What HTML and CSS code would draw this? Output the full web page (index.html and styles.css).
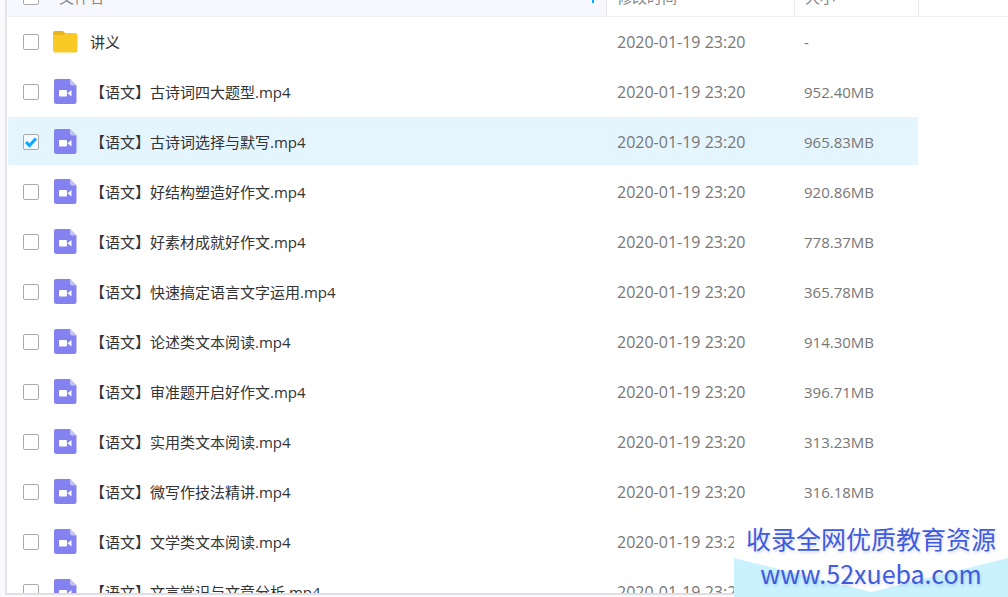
FILE: index.html
```html
<!DOCTYPE html>
<html lang="zh-CN">
<head>
  <meta charset="UTF-8">
  <title>文件列表</title>
  <link rel="stylesheet" href="styles.css">
</head>
<body>
  <!-- 文件图标 -->
  <svg class="sprite" aria-hidden="true">
    <symbol id="icon-folder" viewBox="0 0 26 26">
      <path fill="#e9b51c" d="M1 5V4a2 2 0 0 1 2-2h8l3 3v3H1z"/>
      <path fill="#f9c926" d="M1 6h11l2-2h9a2.5 2.5 0 0 1 2.5 2.5V21a2.5 2.5 0 0 1-2.5 2.5H3.5A2.5 2.5 0 0 1 1 21z"/>
    </symbol>
    <symbol id="icon-video" viewBox="0 0 26 26">
      <path fill="#8482f0" d="M4 0h14l6.5 6.5V22.500a2.5 2.5 0 0 1-2.500 2.500H4.500A2.5 2.5 0 0 1 2 22.500V2a2 2 0 0 1 2-2z"/>
      <path fill="#c3c2fa" d="M18 0l6.500 6.500h-4.500a2 2 0 0 1-2-2z"/>
      <rect fill="#fff" x="7" y="11" width="8" height="6.5" rx="1"/>
      <path fill="#fff" d="M15.5 14.300l4-3.300v6.500z"/>
    </symbol>
  </svg>

  <main class="file-panel">
    <table class="file-table">
      <colgroup>
        <col class="col-check">
        <col>
        <col class="col-time">
        <col class="col-size">
        <col class="col-rest">
      </colgroup>
      <thead>
        <tr>
          <th class="sorted check-cell"><input type="checkbox" class="check" aria-label="全选"></th>
          <th class="sorted"><div class="head-name">文件名<svg class="sort-arrow" viewBox="0 0 10 14"><path d="M5 1v12M1 5l4-4 4 4"/></svg></div></th>
          <th class="split">修改时间</th>
          <th class="split">大小</th>
          <th class="split"></th>
        </tr>
      </thead>
      <tbody>
        <tr>
          <td class="check-cell"><input type="checkbox" class="check" id="f1"></td>
          <td><label class="name" for="f1"><svg class="icon"><use href="#icon-folder"/></svg>讲义</label></td>
          <td class="time">2020-01-19 23:20</td>
          <td class="size">-</td>
        </tr>
        <tr>
          <td class="check-cell"><input type="checkbox" class="check" id="f2"></td>
          <td><label class="name" for="f2"><svg class="icon"><use href="#icon-video"/></svg>【语文】古诗词四大题型.mp4</label></td>
          <td class="time">2020-01-19 23:20</td>
          <td class="size">952.40MB</td>
        </tr>
        <tr class="selected">
          <td class="check-cell"><input type="checkbox" class="check" id="f3" checked></td>
          <td><label class="name" for="f3"><svg class="icon"><use href="#icon-video"/></svg>【语文】古诗词选择与默写.mp4</label></td>
          <td class="time">2020-01-19 23:20</td>
          <td class="size">965.83MB</td>
        </tr>
        <tr>
          <td class="check-cell"><input type="checkbox" class="check" id="f4"></td>
          <td><label class="name" for="f4"><svg class="icon"><use href="#icon-video"/></svg>【语文】好结构塑造好作文.mp4</label></td>
          <td class="time">2020-01-19 23:20</td>
          <td class="size">920.86MB</td>
        </tr>
        <tr>
          <td class="check-cell"><input type="checkbox" class="check" id="f5"></td>
          <td><label class="name" for="f5"><svg class="icon"><use href="#icon-video"/></svg>【语文】好素材成就好作文.mp4</label></td>
          <td class="time">2020-01-19 23:20</td>
          <td class="size">778.37MB</td>
        </tr>
        <tr>
          <td class="check-cell"><input type="checkbox" class="check" id="f6"></td>
          <td><label class="name" for="f6"><svg class="icon"><use href="#icon-video"/></svg>【语文】快速搞定语言文字运用.mp4</label></td>
          <td class="time">2020-01-19 23:20</td>
          <td class="size">365.78MB</td>
        </tr>
        <tr>
          <td class="check-cell"><input type="checkbox" class="check" id="f7"></td>
          <td><label class="name" for="f7"><svg class="icon"><use href="#icon-video"/></svg>【语文】论述类文本阅读.mp4</label></td>
          <td class="time">2020-01-19 23:20</td>
          <td class="size">914.30MB</td>
        </tr>
        <tr>
          <td class="check-cell"><input type="checkbox" class="check" id="f8"></td>
          <td><label class="name" for="f8"><svg class="icon"><use href="#icon-video"/></svg>【语文】审准题开启好作文.mp4</label></td>
          <td class="time">2020-01-19 23:20</td>
          <td class="size">396.71MB</td>
        </tr>
        <tr>
          <td class="check-cell"><input type="checkbox" class="check" id="f9"></td>
          <td><label class="name" for="f9"><svg class="icon"><use href="#icon-video"/></svg>【语文】实用类文本阅读.mp4</label></td>
          <td class="time">2020-01-19 23:20</td>
          <td class="size">313.23MB</td>
        </tr>
        <tr>
          <td class="check-cell"><input type="checkbox" class="check" id="f10"></td>
          <td><label class="name" for="f10"><svg class="icon"><use href="#icon-video"/></svg>【语文】微写作技法精讲.mp4</label></td>
          <td class="time">2020-01-19 23:20</td>
          <td class="size">316.18MB</td>
        </tr>
        <tr>
          <td class="check-cell"><input type="checkbox" class="check" id="f11"></td>
          <td><label class="name" for="f11"><svg class="icon"><use href="#icon-video"/></svg>【语文】文学类文本阅读.mp4</label></td>
          <td class="time">2020-01-19 23:20</td>
          <td class="size"></td>
        </tr>
        <tr>
          <td class="check-cell"><input type="checkbox" class="check" id="f12"></td>
          <td><label class="name" for="f12"><svg class="icon"><use href="#icon-video"/></svg>【语文】文言常识与文章分析.mp4</label></td>
          <td class="time">2020-01-19 23:20</td>
          <td class="size"></td>
        </tr>
      </tbody>
    </table>
  </main>

  <!-- 右下角水印 -->
  <div class="watermark">
    <div class="slogan">收录全网优质教育资源</div>
    <div class="site">www.52xueba.com</div>
  </div>
</body>
</html>
```
FILE: styles.css
```css
body {
  margin: 0;
  height: 100vh;
  box-sizing: border-box;
  padding: 0 0 2px 5px;
  background-color: #fafafc;
  display: flex;
  overflow: hidden;
  font-family: "Open Sans", "Noto Sans CJK SC", sans-serif;
  font-size: 15px;
  color: #333;
}
.sprite {
  display: none;
}
.file-panel {
  flex: 1;
  min-width: 0;
  overflow: hidden;
  background-color: #fff;
  border-left: 2px solid #e4e4e8;
  border-bottom: 2px solid #dfdfe2;
}

/* 文件表格 */
.file-table {
  width: 100%;
  margin-top: -22px;
  table-layout: fixed;
  border-collapse: separate;
  border-spacing: 0;
}
.col-check { width: 45px; }
.col-time { width: 188px; }
.col-size { width: 124px; }
.col-rest { width: 90px; }
th {
  height: 38px;
  padding: 0;
  border-bottom: 1px solid #eef0f6;
  text-align: left;
  font-weight: normal;
  line-height: 20px;
  color: #888;
}
th.sorted {
  background-color: #f7f8fd;
}
th.split {
  padding-left: 10px;
  border-left: 1px solid #e8eaef;
}
.head-name {
  display: flex;
  align-items: center;
  justify-content: space-between;
  padding: 0 8px 0 7px;
}
.sort-arrow {
  width: 10px;
  height: 14px;
  fill: none;
  stroke: #09aaff;
  stroke-width: 2;
}
td {
  height: 48px;
  padding: 0;
  border-bottom: 2px solid transparent;
  background-clip: padding-box;
  color: #777;
}
.check-cell {
  padding-left: 16px;
}
td.check-cell,
.time,
.size {
  height: 46px;
  padding-top: 2px;
}
.selected td {
  background-color: #e5f5fe;
}
.selected td:first-child {
  border-left: 1px solid #fff;
  padding-left: 15px;
}
.time {
  padding-left: 11px;
  font-size: 16px;
}
.size {
  padding-left: 10px;
}
.name {
  display: flex;
  align-items: center;
  color: #333;
  white-space: nowrap;
}
.icon {
  width: 26px;
  height: 26px;
  margin: 2px 12px 0 0;
}

.check {
  appearance: none;
  display: block;
  width: 16px;
  height: 16px;
  margin: 0;
  border: 1px solid #aaa;
  border-radius: 2px;
  background-color: #fff;
}
.check:checked {
  background: #f4faff url("data:image/svg+xml,%3Csvg xmlns='http://www.w3.org/2000/svg' viewBox='0 0 14 14'%3E%3Cpath d='M2 7l3.5 3.5L12 3.5' fill='none' stroke='%2309aaff' stroke-width='3'/%3E%3C/svg%3E") center / 14px no-repeat;
}

/* 水印 */
.watermark {
  position: absolute;
  right: 0;
  bottom: 0;
  isolation: isolate;
  width: 274px;
  padding-bottom: 6px;
  background-color: #fff;
  color: #3f5be0;
  font-family: "Noto Sans CJK SC", sans-serif;
  font-size: 25px;
  line-height: 35px;
  text-align: center;
  text-shadow: 1px 2px 3px rgba(60, 80, 160, 0.2);
}
.watermark::before {
  content: "";
  position: absolute;
  z-index: -1;
  inset: auto 0 0;
  height: 39px;
  background-color: #c9f2fe;
  clip-path: polygon(0 0, 50% 34px, 100% 0, 100% 100%, 0 100%);
}
```
